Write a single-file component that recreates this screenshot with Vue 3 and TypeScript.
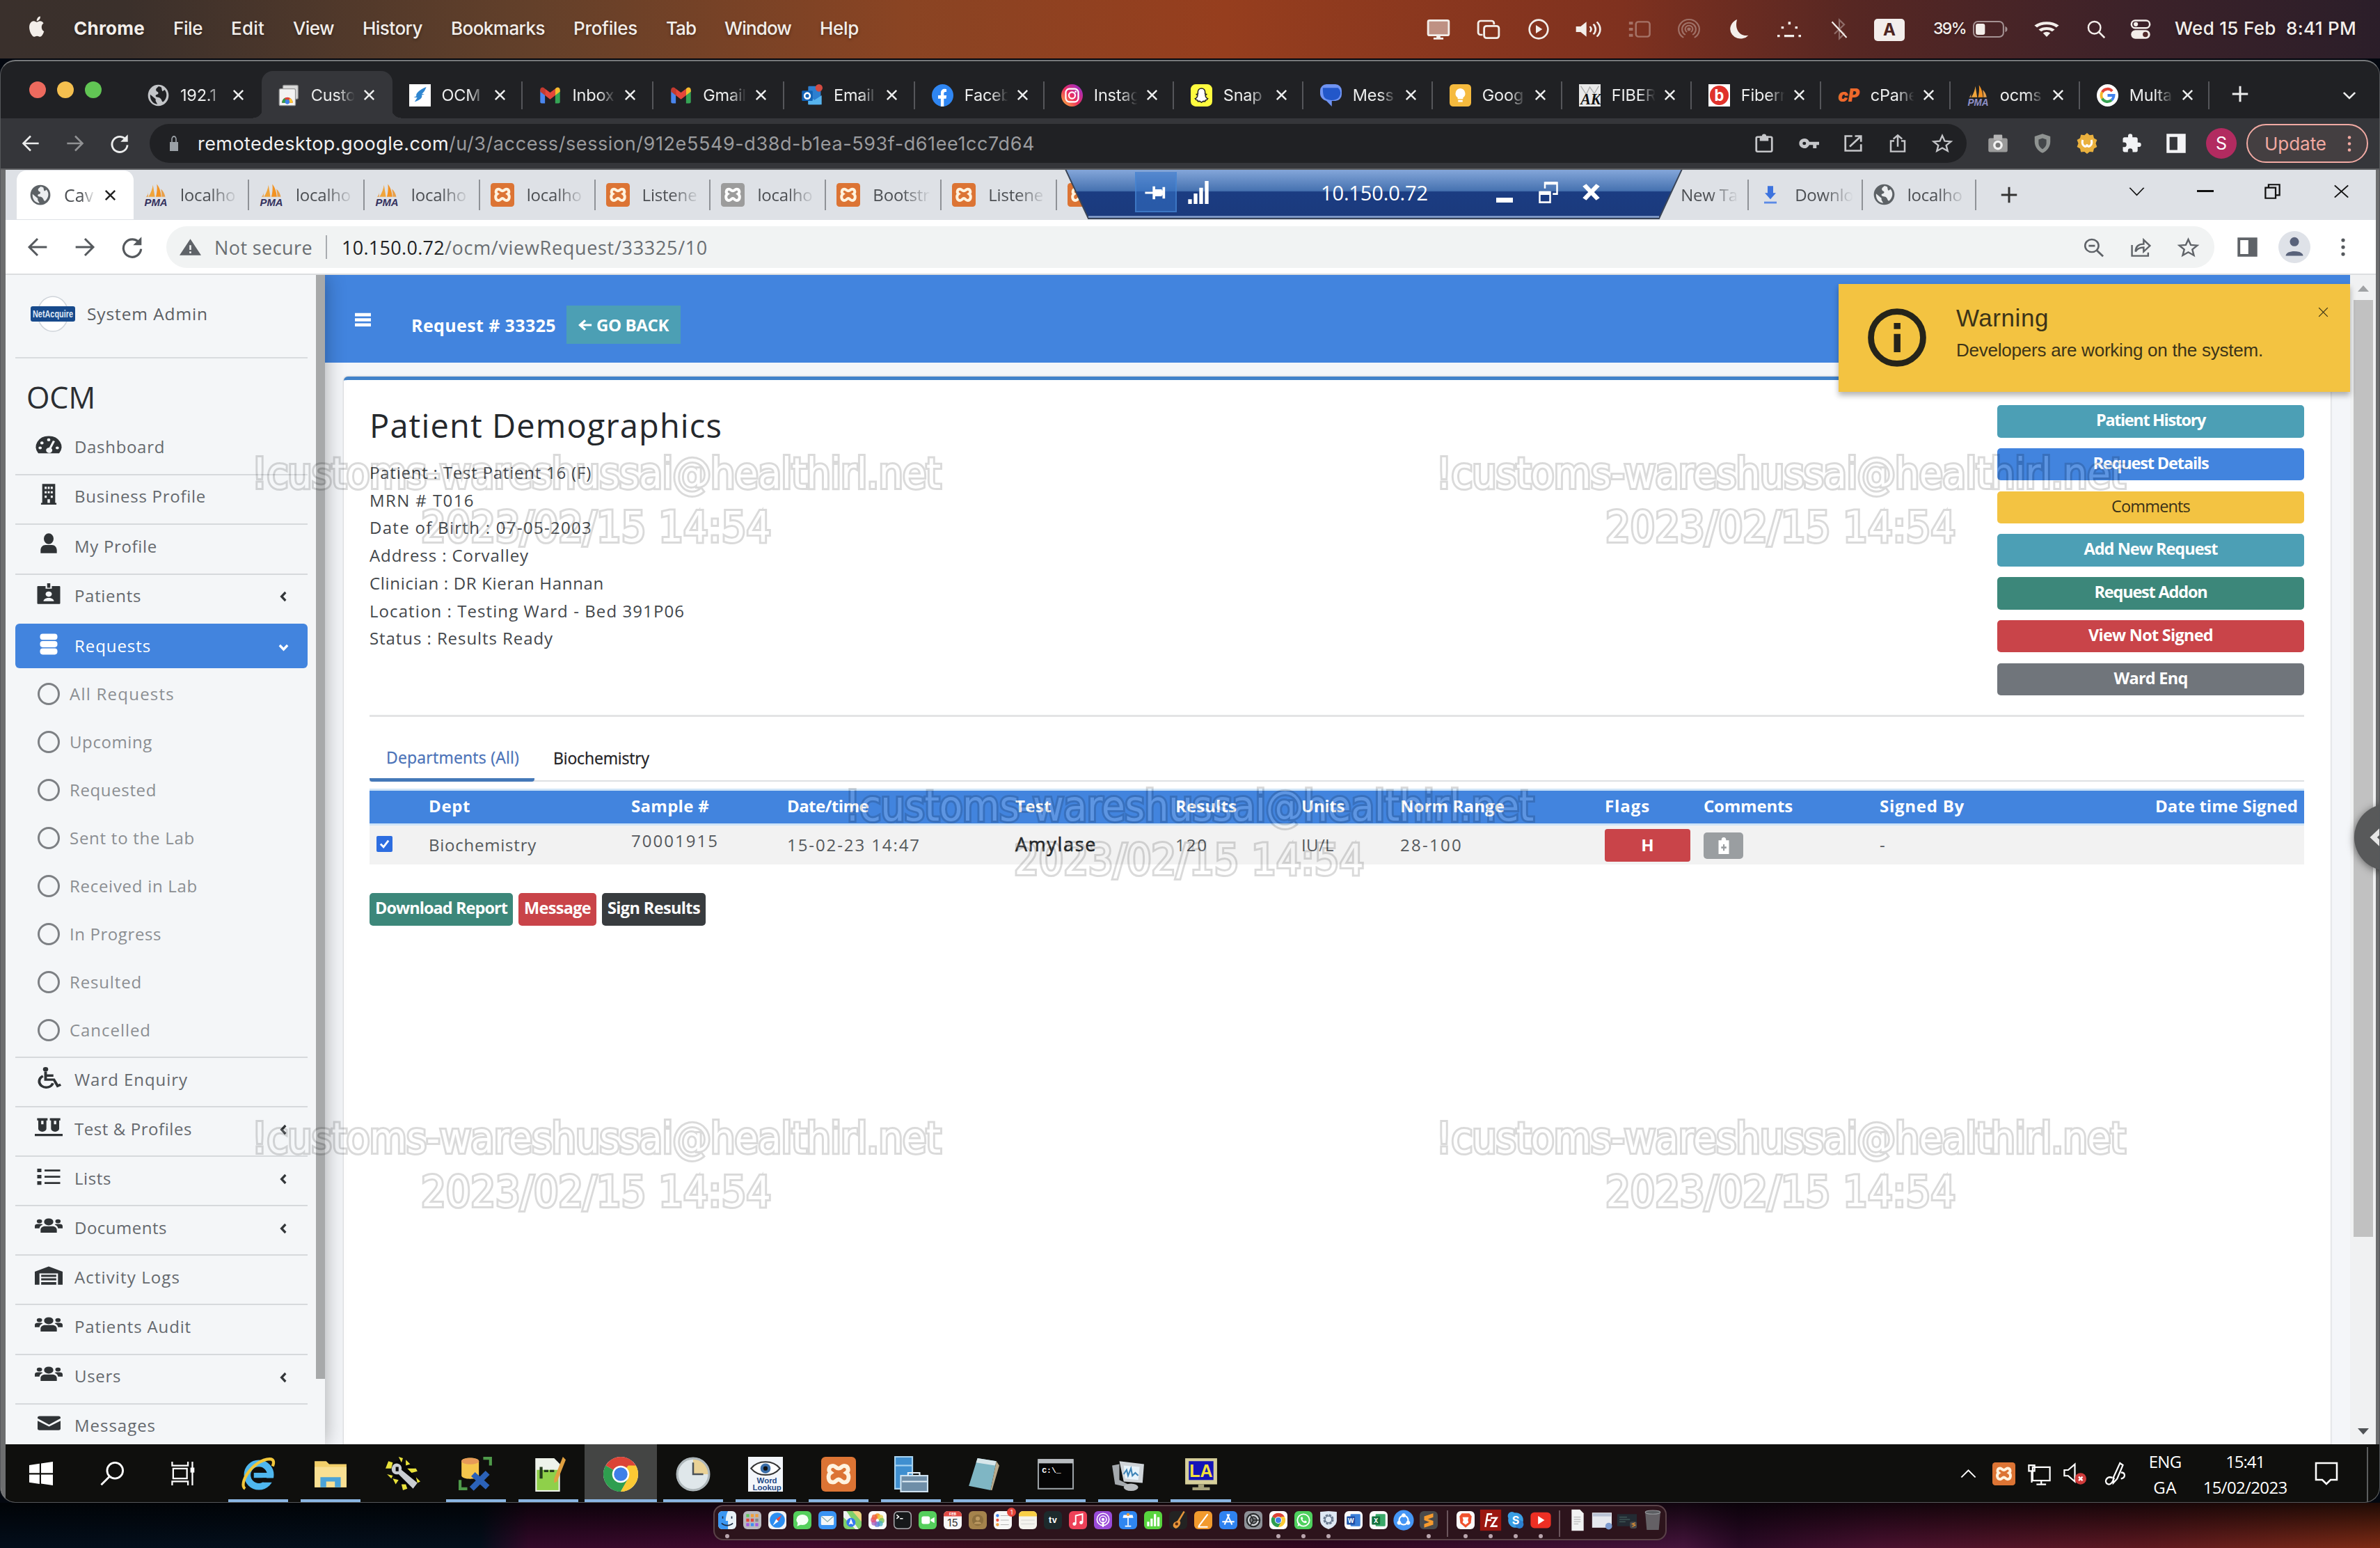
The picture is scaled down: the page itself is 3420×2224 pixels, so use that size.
<script setup lang="ts">
import { h } from 'vue'
import type { FunctionalComponent, ObjectDirective } from 'vue'

type Item = { t: string; w: number }

/* Tracks a label out (or in) so that it occupies the given width. */
const vFit: ObjectDirective<HTMLElement, number> = {
  mounted(el, { value }) {
    const range = document.createRange()
    range.selectNodeContents(el)
    const natural = range.getBoundingClientRect().width
    const count = (el.textContent ?? '').length
    if (!natural || !count) return
    el.style.letterSpacing = `${(value - natural) / count}px`
    el.style.width = `${value}px`
  },
}

const xamppBody =
  '<rect width="24" height="24" rx="3" fill="#dc7434"/><path d="M8.2 6.2c-3 0-3.6 3.4-1.6 4.8-2.400 1.600-2 6.600 1.600 6.600 2 0 2.200-2 3.800-2s1.800 2 3.800 2c3.600 0 4-5 1.600-6.600 2-1.400 1.400-4.800-1.600-4.800-1.700 0-2 1.800-3.800 1.800s-2.100-1.800-3.800-1.800z" fill="none" stroke="#fff3df" stroke-width="2.800"/>'

const pmaBody = (ink: string) =>
  `<path d="M9 2l2 12H4.500C7 10 8.500 6 9 2z" fill="#f0a53c"/><path d="M13 1c3 4 4 8 4.500 13h-5.500c1-4 1.500-8 1-13z" fill="#f29222"/><path d="M17 6c2.500 2 4 5 4.500 8h-3.500c0-3-.3-5-1-8zM4 9c.2 2-.6 4-2 5h2.200z" fill="#e8a04a"/><text x="12" y="23.500" text-anchor="middle" font-family="Liberation Sans, sans-serif" font-weight="700" font-style="italic" font-size="10.500" fill="${ink}">PMA</text>`

const chromeBody =
  '<circle cx="12" cy="12" r="12" fill="#fff"/><path d="M12 12L1.600 6A12 12 0 0 1 22.400 6z" fill="#dc4437"/><path d="M12 12L1.600 6A12 12 0 0 0 12 24l5.200-9z" fill="#2f9e4f"/><path d="M12 12l5.200-6h5.200A12 12 0 0 1 12 24l5-9z" fill="#fbc934"/><circle cx="12" cy="12" r="5.900" fill="#fff"/><circle cx="12" cy="12" r="4.700" fill="#3f7fe8"/>'

const globeBody = (fg: string, bg: string) =>
  `<circle cx="12" cy="12" r="11.500" fill="${fg}"/><path d="M3 11l6 5v2l2 3.500c-5-.5-8.500-4.500-8-10.500zM12 2.500c-1 1.500-3 2-2.500 4s2.500 1 2.500 3-3 1-3 3 5 1 5.500 3c1.500 1 1 3.500 3 3.500 4-3.500 5-9 1.500-13l-2 1.500c-1 0-1-2-1.500-4-1-.8-2.500-1-3.500-1z" fill="${bg}"/>`

const app = (fill: string, inner: string) => `<rect width="24" height="24" rx="5.500" fill="${fill}"/>${inner}`
const glyph = (s: string, size: number, fill: string, y = 17.5, weight = 700) =>
  `<text x="12" y="${y}" text-anchor="middle" font-family="Inter, sans-serif" font-weight="${weight}" font-size="${size}" fill="${fill}">${s}</text>`
const line = (d: string, w = 2, c = 'currentColor') =>
  `<path d="${d}" fill="none" stroke="${c}" stroke-width="${w}"/>`
const solid = (d: string, c = 'currentColor') => `<path d="${d}" fill="${c}"/>`
const usersBody = solid(
  'M12 3.500a4 4 0 1 1 0 8 4 4 0 0 1 0-8zM4 4.500a2.300 2.300 0 1 1 0 4.600 2.300 2.300 0 0 1 0-4.600zM20 4.500a2.300 2.300 0 1 1 0 4.600 2.300 2.300 0 0 1 0-4.600zM5 20v-3.500c0-2.500 2-4 4-4h6c2 0 4 1.500 4 4V20zM0 15v-2.500C0 11 1 10 2.500 10h2.800c.6 0 1.200.3 1.500.7C5 11.700 4 13.200 4 15zM24 15v-2.500c0-1.500-1-2.500-2.500-2.500h-2.800c-.6 0-1.200.3-1.500.7 1.800 1 2.800 2.500 2.800 4.300z',
)

const icons: Record<string, string> = {
  apple: solid('M17.100 12.700c0-2.500 2-3.700 2.100-3.800-1.200-1.700-3-1.900-3.600-2-1.500-.1-3 .9-3.700.9s-2-.9-3.200-.9c-1.700 0-3.200 1-4.100 2.500-1.700 3-.4 7.500 1.300 10 .8 1.200 1.800 2.500 3.100 2.500 1.200 0 1.700-.8 3.200-.8s1.900.8 3.200.8 2.200-1.200 3-2.400c.9-1.400 1.300-2.700 1.300-2.800 0 0-2.600-1-2.600-4zM14.700 5.400c.7-.8 1.100-2 1-3.100-1 0-2.200.6-2.900 1.500-.6.7-1.200 1.900-1 3 1.100.1 2.200-.6 2.900-1.400z'),
  display: '<rect x="1.500" y="2.500" width="21" height="16" rx="1.500" fill="#fff" fill-opacity=".45" stroke="currentColor" stroke-width="2"/>' + solid('M10 19h4v2h3v2H7v-2h3z'),
  windows: '<rect x="7.500" y="8.500" width="15" height="13" rx="2.500" fill="none" stroke="currentColor" stroke-width="2"/>' + line('M6 18H4a2.500 2.500 0 0 1-2.500-2.500v-10A2.500 2.500 0 0 1 4 3h11a2.500 2.500 0 0 1 2.500 2.500v1.500'),
  playc: '<circle cx="12" cy="12" r="10" fill="none" stroke="currentColor" stroke-width="2"/>' + solid('M9 7.500l7 4.500-7 4.500z'),
  volume: solid('M1 9h4l5-5v16l-5-5H1z') + line('M13 9c1.300 1.800 1.300 4.200 0 6M16 6.500c2.500 3.300 2.500 7.700 0 11M19 4c3.800 4.800 3.800 11.200 0 16', 1.6),
  stage: '<rect x="9" y="4" width="14" height="16" rx="2.500" fill="none" stroke="currentColor" stroke-width="1.800"/>' + solid('M2 4h4v3H2zM2 10.500h4v3H2zM2 17h4v3H2z'),
  airdrop: line('M6.500 21a10.500 10.500 0 1 1 11 0M8.300 18a7 7 0 1 1 7.400 0M10 15a3.800 3.800 0 1 1 4 0', 1.5) + '<circle cx="12" cy="12" r="1.800" fill="currentColor"/>',
  moon: solid('M10 1.500C5.500 3.500 3 7.500 3 12a10.500 10.500 0 0 0 18.500 6.500C13 20.500 7 12 10 1.500z'),
  keyglow: solid('M11 4h2.500v3H11zM4 9h2.500v2.500H4zM18 9h2.500v2.500H18zM0 18h2.500v2.500H0zM21.500 18H24v2.500h-2.500zM7 18h10v2.500H7z'),
  btoff: '<g opacity=".35">' + line('M6 7l12 10-6 5V2l6 5L6 17', 1.8) + '</g>' + line('M3 4l18 17', 1.8),
  battery: '<rect x="1" y="1" width="42" height="22" rx="6" fill="none" stroke="#fff" stroke-opacity=".5" stroke-width="2"/><rect x="4" y="4" width="13" height="16" rx="3" fill="currentColor"/><path d="M45.500 8c2 .5 3 2 3 4s-1 3.500-3 4z" fill="#fff" fill-opacity=".5"/>',
  wifi: solid('M12 23l-3.500-4.700a5.300 5.300 0 0 1 7 0z') + line('M5.500 15a9.500 9.500 0 0 1 13 0M1.500 9.700a15.200 15.200 0 0 1 21 0', 3.6),
  search: '<circle cx="10" cy="10" r="7.500" fill="none" stroke="currentColor" stroke-width="2.100"/>' + line('M15.500 15.500l7 7', 2.2),
  control: '<rect x="1.500" y="2" width="21" height="8.500" rx="4.200" fill="none" stroke="currentColor" stroke-width="2"/><circle cx="6.500" cy="6.200" r="2.500" fill="currentColor"/><rect x="1" y="13" width="22" height="10" rx="5" fill="currentColor"/><circle cx="17.500" cy="18" r="3" fill="#51292a"/>',
  globeDark: globeBody('#c3c5c8', '#202124'),
  globe: globeBody('#5d6266', '#eceef0'),
  crd: '<rect x="5" y="1" width="17" height="15" rx="1.500" fill="#d8d8d8" stroke="#888"/><rect x="1" y="5" width="18" height="18" rx="1.500" fill="#f3f3f3" stroke="#999"/><path d="M4 20a6 6 0 0 1 12 0z" fill="#dc4437"/><path d="M4 20a6 6 0 0 1 3-5l3 5z" fill="#2f9e4f"/><path d="M16 20a6 6 0 0 0-3-5l-3 5z" fill="#fbc934"/><circle cx="10" cy="19" r="2.500" fill="#3f7fe8"/>',
  bolt: '<rect width="24" height="24" fill="#fff"/><path d="M19 3C11 6 7 10 8 13l-3 1 4 .5-3 4.500c7-2 9-5 8-7.500l3-.5-3-.8c2-1 4-4 5-7.200z" fill="#2f86d0"/>',
  gmail: solid('M1 6v13c0 1 .7 1.700 1.700 1.700H6.300V11z', '#4a86ee') + solid('M23 6v13c0 1-.7 1.700-1.700 1.700h-3.600V11z', '#35a555') + solid('M17.700 4.800L12 9 6.300 4.800V12L12 16.300l5.700-4.300z', '#e5463a') + solid('M1 6v2l5.300 4V4.800l-1.300-1C3.300 2.600 1 3.800 1 6z', '#c33a30') + solid('M23 6v2l-5.300 4V4.800l1.300-1c1.700-1.200 4 0 4 2.200z', '#f6bb2e'),
  outlook: '<rect x="8" y="2" width="14" height="20" rx="1" fill="#2d7fd0"/><path d="M8 12l7 5 8-5v10H8z" fill="#57b4ee"/><rect x="1" y="7" width="12" height="11" rx="1" fill="#1363b5"/>' + '<circle cx="7" cy="12.500" r="3" fill="none" stroke="#fff" stroke-width="2"/><circle cx="20" cy="4" r="4" fill="#d24b42"/>',
  facebook: '<circle cx="12" cy="12" r="12" fill="#2f86f2"/>' + solid('M10 24v-8.500H7V12h3V9.500C10 6.300 12 5 14.300 5c1 0 2 .2 2 .2v3h-1.200c-1.300 0-1.700.8-1.700 1.600V12h3l-.5 3.500h-2.500V24z', '#fff'),
  instagram: '<defs><linearGradient id="ig" x1="0" y1="1" x2="1" y2="0"><stop offset="0" stop-color="#fdc43f"/><stop offset=".45" stop-color="#ee2f5b"/><stop offset="1" stop-color="#8a2be0"/></linearGradient></defs><circle cx="12" cy="12" r="12" fill="url(#ig)"/><rect x="5" y="5" width="14" height="14" rx="4" fill="none" stroke="#fff" stroke-width="1.700"/><circle cx="12" cy="12" r="3.500" fill="none" stroke="#fff" stroke-width="1.700"/><circle cx="16" cy="8" r="1" fill="#fff"/>',
  snapchat: '<rect width="24" height="24" rx="5.500" fill="#fffc3f"/><path d="M12 4.500c-2.500 0-4 1.800-4 4v2l-1.500.3 1.300 1.500c-.5 1.800-1.600 2.800-2.800 3.200l1 1.300 1.500.4.500 1.300 2-.2 2 1.300 2-1.300 2 .2.500-1.300 1.500-.4 1-1.300c-1.200-.4-2.300-1.400-2.800-3.200l1.300-1.500L16 10.500v-2c0-2.200-1.500-4-4-4z" fill="#fff" stroke="#222" stroke-width="1.200"/>',
  gmessages: '<path d="M0 7a7 7 0 0 1 7-7h10a7 7 0 0 1 7 7v4a7 7 0 0 1-7 7h-4v6l-6-6C3 17 0 14 0 10z" fill="#6f93f2"/><path d="M3 4h17a7 7 0 0 1 1 10c-4 5-15 4-17-1-1-3-1-6-1-9z" fill="#2257c9"/>',
  keep: '<rect width="24" height="24" rx="4" fill="#f5ba3e"/>' + solid('M12 4.500a5.500 5.500 0 0 1 3 10V16H9v-1.500a5.500 5.500 0 0 1 3-10zM9.500 17h5v2.200h-5z', '#fff'),
  ak: '<rect width="24" height="24" fill="#e9e9e9"/><path d="M2 2l6 9 4-8 5 7 5-8" stroke="#aaa" fill="none"/><text x="13" y="22" text-anchor="middle" font-family="Liberation Serif, serif" font-weight="700" font-style="italic" font-size="17" fill="#111">AK</text>',
  biz: '<rect width="24" height="24" fill="#fff"/><circle cx="12" cy="12" r="10.500" fill="#e0322b"/>' + glyph('b', 17, '#fff', 18),
  cpanel: '<text x="12" y="19" text-anchor="middle" font-family="Inter, sans-serif" font-weight="900" font-style="italic" font-size="19" fill="#ee6a2c">cP</text>',
  pma: pmaBody('#34315e'),
  pmaLight: pmaBody('#8e90c8'),
  google: '<circle cx="12" cy="12" r="12" fill="#fff"/>' + line('M17.200 7.500A7 7 0 0 0 6 8.500', 3, '#e24436') + line('M6 8.500a7 7 0 0 0 0 7', 3, '#f5b92e') + line('M6 15.500a7 7 0 0 0 10.500 1.600', 3, '#37a353') + line('M12 12h7a7 7 0 0 1-2.500 5', 3, '#4282ee'),
  close: line('M5 5l14 14M19 5L5 19', 2.6),
  thinClose: line('M4 4l16 16M20 4L4 20', 1.6),
  plus: line('M12 3v18M3 12h18', 2.4),
  chevDown: line('M5 8l7 8 7-8', 2.4),
  chevThin: line('M3 5l9 14 9-14', 1.8),
  back: line('M22 12H3M12 3l-9 9 9 9', 2.2),
  fwd: line('M2 12h19M12 3l9 9-9 9', 2.2),
  reload: line('M20 8a9.500 9.500 0 1 0 1.500 6', 2.4) + solid('M22 1v9h-9z'),
  lock: solid('M4 10h16v13H4z') + line('M8 10V6a4 4 0 0 1 8 0v4', 2.2),
  clipboard: '<rect x="3" y="4" width="18" height="18" rx="1.500" fill="none" stroke="currentColor" stroke-width="2.200"/>' + solid('M7 3h2.500a2.500 2.500 0 0 1 5 0H17v6H7z'),
  key: '<path fill-rule="evenodd" d="M7 6a6 6 0 0 1 5.700 4H24v4h-3v4h-4v-4h-4.300A6 6 0 1 1 7 6zm0 4a2 2 0 1 0 0 4 2 2 0 0 0 0-4z" fill="currentColor"/>',
  external: line('M11 3H3v18h18v-8M14 3h7v7M21 3L8 16', 2.2),
  share: line('M8 9H4v13h16V9h-4M12 16V2M7 6.500L12 2l5 4.500', 2),
  star: line('M12 2.500l2.800 6.600 7.200.6-5.500 4.700 1.700 7L12 17.600l-6.200 3.800 1.700-7L2 9.700l7.200-.6z', 1.9),
  camera: '<rect x="1" y="6" width="22" height="16" rx="2" fill="#9b9b9b"/><rect x="7" y="2" width="10" height="6" rx="1" fill="#b5b5b5"/><circle cx="12" cy="14" r="5.500" fill="#f2f2f2"/><circle cx="12" cy="14" r="2.800" fill="#777"/>',
  shield: '<path d="M12 1l9 3v6c0 6-4 11-9 13-5-2-9-7-9-13V4z" fill="#8f9391"/><path d="M12 6l4.500 1.500v4c0 3-2 5.500-4.500 7-2.500-1.500-4.500-4-4.500-7v-4z" fill="#44474a"/>',
  honey: '<path d="M12 0l3 2.500 4-.5 1 4 3.500 2L22 12l1.500 4-3.500 2-1 4-4-.5L12 24l-3-2.500-4 .5-1-4-3.500-2L2 12 .5 8 4 6l1-4 4 .5z" fill="#eab13e"/>' + line('M7 8c-2 7 5 10 5 5 0 5 7 2 5-5', 2.4, '#fff'),
  puzzle: solid('M20.500 11H19V7a2 2 0 0 0-2-2h-4V3.500a2.500 2.500 0 0 0-5 0V5H4a2 2 0 0 0-2 2v3.800h1.500a2.700 2.700 0 0 1 0 5.400H2V20c0 1.100.9 2 2 2h3.800v-1.500a2.700 2.700 0 0 1 5.400 0V22H17a2 2 0 0 0 2-2v-4h1.500a2.500 2.500 0 0 0 0-5z'),
  panelDark: '<path fill-rule="evenodd" d="M1 1h22v22H1zM4.500 4.500v15h9v-15z" fill="#f4f4f6"/>',
  panel: '<path fill-rule="evenodd" d="M1 1h22v22H1zM4 4v16h9V4z" fill="#5f6368"/>',
  dots: '<circle cx="12" cy="4" r="2.100" fill="currentColor"/><circle cx="12" cy="12" r="2.100" fill="currentColor"/><circle cx="12" cy="20" r="2.100" fill="currentColor"/>',
  xampp: xamppBody,
  xamppGrey: xamppBody.replace('#dc7434', '#9c9c9c').replace('#fff3df', '#fff'),
  download: solid('M8 1h8v9h4l-8 8-8-8h4z', '#3d73de') + solid('M3 21h18v2.500H3z', '#5b8ae6'),
  warn: '<path fill-rule="evenodd" d="M12 1l12 21H0zM11 9v6h2V9zM11 17v2.500h2V17z" fill="#5f6368"/>',
  zoomOut: '<circle cx="10" cy="10" r="7.500" fill="none" stroke="currentColor" stroke-width="2"/>' + line('M15.500 15.500l7 7M6.500 10h7', 2.2),
  shareWin: line('M2 9v13h18v-4M6 17c0-6 3-9 9-9V3l7 7-7 7v-5c-4 0-7 1-9 5z', 1.9),
  person: '<circle cx="12" cy="12" r="12" fill="#dfe2e8"/><circle cx="12" cy="8" r="3.400" fill="#59627a"/><path d="M5.500 18.500c0-4.500 13-4.500 13 0z" fill="#59627a"/>',
  restore: line('M3 7h13v14H3zM7 7V3h14v14h-5', 2),
  pin: line('M1 12h9M10 4v16M10 9h8M10 15h8M20 5v14', 2.6) + solid('M10 9h9v6h-9z'),
  bars: solid('M1 19h4v5H1zM7 13h4v11H7zM13 7h4v17h-4zM19 0h4v24h-4z'),
  rdpRestore: line('M2 12h12v11H2zM8 8V2h14v12h-5', 2) + solid('M2 11h12v4H2zM8 1h14v3H8z'),
  bold: line('M4 2l16 20M20 2L4 22', 5.5),
  dash: '<path fill-rule="evenodd" d="M12 2a12 12 0 0 0-10 19h20A12 12 0 0 0 12 2zm0 2.500a1.600 1.600 0 1 1 0 3.200 1.600 1.600 0 0 1 0-3.200zM5.500 8a1.600 1.600 0 1 1 0 3.200A1.600 1.600 0 0 1 5.500 8zM3.800 13.500a1.600 1.600 0 1 1 0 3.200 1.600 1.600 0 0 1 0-3.200zm16.400 0a1.600 1.600 0 1 1 0 3.200 1.600 1.600 0 0 1 0-3.200zM16 7l2 .7-3.500 7.800a3 3 0 1 1-2-.8z" fill="currentColor"/>',
  building: '<path fill-rule="evenodd" d="M4 1h16v21h1.500v2h-19v-2H4zM7 4v2.500h2.500V4zM14.500 4v2.500H17V4zM7 9v2.500h2.500V9zM14.500 9v2.500H17V9zM7 14v2.500h2.500V14zM14.500 14v2.500H17V14zM10.500 18v4h3v-4zM10.800 4v2.500h2.400V4zM10.800 9v2.500h2.400V9z" fill="currentColor"/>',
  user: solid('M12 1a6 6 0 1 1 0 12 6 6 0 0 1 0-12zM2 23v-3c0-3.500 2.500-6 6-6h8c3.500 0 6 2.500 6 6v3z'),
  badge: '<path fill-rule="evenodd" d="M2 3h7v3h6V3h7c.6 0 1 .4 1 1v18c0 .6-.4 1-1 1H2c-.6 0-1-.4-1-1V4c0-.6.4-1 1-1zM12 9a3 3 0 1 0 0 6 3 3 0 0 0 0-6zM7 20h10c0-5-10-5-10 0z" fill="currentColor"/><rect x="10.500" y="0" width="3" height="5" fill="currentColor"/>',
  database: '<g fill="currentColor"><rect x="2" y="1" width="20" height="6.500" rx="3"/><rect x="2" y="8.700" width="20" height="6.500" rx="3"/><rect x="2" y="16.400" width="20" height="6.500" rx="3"/></g>',
  wheelchair: '<circle cx="9" cy="2.500" r="2.500" fill="currentColor"/>' + line('M9 5v9h8l3.500 7 3-1.500M9.500 9.500h7M6.500 10a6.700 6.700 0 1 0 9.500 8', 2.6),
  vials: '<path fill-rule="evenodd" d="M2 2h9v2.500h-1V14a3.500 3.500 0 0 1-7 0V4.500H2zM5.500 5v4h2V5zM13 2h9v2.500h-1V14a3.500 3.500 0 0 1-7 0V4.500h-1zM16.500 5v4h2V5zM0 20h24v2.500H0z" fill="currentColor"/>',
  list: solid('M1 3h4v4H1zM8 4h15v2.200H8zM1 10h4v4H1zM8 11h15v2.200H8zM1 17h4v4H1zM8 18h15v2.200H8z'),
  users: usersBody,
  warehouse: '<path fill-rule="evenodd" d="M0 8l12-6 12 6v15h-4V10H4v13H0zM5.500 11.500h13v2.500h-13zM5.500 15.500h13V18h-13zM5.500 20h13v3h-13z" fill="currentColor"/>',
  envelope: '<path d="M2 3h20c1 0 2 .8 2 2v1l-12 8L0 6V5c0-1.200 1-2 2-2zM0 9l12 7.500L24 9v10c0 1.200-1 2-2 2H2c-1 0-2-.8-2-2z" fill="currentColor"/>',
  chevL: line('M16 4l-8 8 8 8', 4.6),
  chevD: line('M4 8l8 8 8-8', 4.8),
  burger: solid('M1 2h22v5H1zM1 10h22v5H1zM1 18h22v5H1z'),
  arrowL: line('M23 12H4M12 3l-9 9 9 9', 4.2),
  info: '<circle cx="12" cy="12" r="10.700" fill="none" stroke="currentColor" stroke-width="2.500"/>' + solid('M10.700 6h2.700v2.500h-2.700zM10.700 10.500h2.700V18h-2.700z'),
  check: line('M4 12l6 6L20 5', 4),
  note: '<path fill-rule="evenodd" d="M3 4h5a4 4 0 0 1 8 0h5v19H3zM10.800 9.500v3.200H7.600v2.600h3.200v3.200h2.600v-3.200h3.200v-2.600h-3.200V9.500z" fill="#fff"/>',
  winlogo: solid('M0 3.500L10.500 2v9.500H0zM12 1.800L24 0v11.500H12zM0 13h10.500v9.500L0 21zM12 13h12v11l-12-1.700z'),
  magnify: '<circle cx="15" cy="9" r="8" fill="none" stroke="currentColor" stroke-width="2"/>' + line('M9.500 15L1 23.500', 2),
  taskview: line('M1 0v4h16V0M1 24v-4h16v4M2 7h14v10H2zM21.500 0v24', 1.6) + solid('M19.500 6h4v5h-4z'),
  ie: '<circle cx="12.500" cy="12.500" r="8" fill="none" stroke="#4fb7ee" stroke-width="4.600"/><path d="M9 11h11v3.500H9z" fill="#4fb7ee"/><path d="M15 14.600h8.500v3h-8z" fill="#0f0f0d"/><path d="M3 22C-2 19 8 2 20 1.500c3 0 3 2.500 2 5" fill="none" stroke="#f2c73a" stroke-width="2"/>',
  folder: '<path d="M1 3h8l2 2h12v16H1z" fill="#f2cf6a"/><path d="M1 7h22v14H1z" fill="#f9e093"/><path d="M5 21v-7h14v7h-4v-4H9v4z" fill="#4aa3d8"/>',
  tools: '<path d="M2 5l8-3 4 3 6 2-2 4 5 5-3 6-8-2-7-8z" fill="#050505"/><path d="M0 8l2-5 3 1-1 4zM9 0l3 1-1 3zM14 2l3 3-3 1zM15 8l6 0 1 2-4 1zM1 12l4 1-1 2zM5 15l4 1-2 3zM11 19l3 0 1 3-3 1zM21 14l3 3-2 1z" fill="#e8e13a"/><path fill-rule="evenodd" d="M5 6c2-3 7-1 6 3l11 9-3 4-10-10c-4 1-6-3-4-6zm2 1l0 3 2 0 0-3z" fill="#c9cdd1"/>',
  sql: '<path d="M2 3c0-3 12-3 12 0v10c0 3-12 3-12 0z" fill="#f6c64c"/><ellipse cx="8" cy="3" rx="6" ry="2.200" fill="#e79a58"/><path d="M10 12l10 9M20 11L9 22" stroke="#2b62b8" stroke-width="4"/><path d="M17 1h5v5M1 16v6h5" stroke="#4f9a4a" stroke-width="2" fill="none"/>',
  npp: '<path d="M3 1h13l4 4v19H3z" fill="#eef2ea"/><path d="M4 9h15v14H4z" fill="#8fd04a"/><path d="M6 7h2v8H6zM9 9h3v1.500H9zM13 9h3v1.500h-3z" fill="#243a1c"/><path d="M22 0l2 2-6 15-2 1v-3z" fill="#e0a040"/>',
  chrome: chromeBody,
  clock: '<circle cx="12" cy="12" r="11.500" fill="#dfe7ea"/><path d="M12 12V1.500A10.500 10.500 0 0 1 22.500 12z" fill="#ead296"/><circle cx="12" cy="12" r="11" fill="none" stroke="#aeb7ba" stroke-width="1.500"/><path d="M12 4v8h7" stroke="#4a5258" stroke-width="1.200" fill="none"/>',
  wordlookup: '<rect width="24" height="24" fill="#f3f6fa"/><path d="M2 8c5-6 15-6 20 0-5 6-15 6-20 0z" fill="#fff" stroke="#333"/><circle cx="12" cy="8" r="3.500" fill="#3a6ea8"/><circle cx="12" cy="8" r="1.500" fill="#111"/><text x="13" y="18" text-anchor="middle" font-family="Liberation Sans, sans-serif" font-weight="700" font-size="5.500" fill="#234a86">Word</text><text x="13" y="23" text-anchor="middle" font-family="Liberation Sans, sans-serif" font-weight="700" font-size="5.500" fill="#234a86">Lookup</text>',
  server: '<path d="M1 0h12v22H1z" fill="#3f8fd0" stroke="#a8d4f2"/><path d="M1 6h12" stroke="#a8d4f2"/><rect x="5" y="13" width="18.500" height="11" fill="#6f8ea8" stroke="#cfe2f0"/><path d="M10 13v-2h8v2M6 17h17" stroke="#e8f2fa" fill="none"/>',
  notepad: '<path d="M8 1l13 2-4 20-15-3z" fill="#7fb6c4"/><path d="M8 1l13 2-1 3L7 4z" fill="#d8e6ea"/><path d="M21 3l2 3-5 17-1 0z" fill="#b9a98a"/>',
  cmd: '<rect x="0" y="2" width="24" height="20" fill="#050505" stroke="#9aa0a4"/><rect x="0" y="1.500" width="24" height="3" fill="#b8bcc0"/><text x="2.500" y="11" font-family="Liberation Mono, monospace" font-weight="700" font-size="5.500" fill="#fff">C:\\_</text>',
  monitor: '<path d="M6 3l17 2-1 13-13-1z" fill="#cfd4d8"/><path d="M9 6l11 1-1 9-9-1z" fill="#e8f4fb"/><path d="M9 12l2-3 1 4 2-5 1 5 2-2 2 2" stroke="#3d84b8" fill="none"/><path d="M1 6l5-1v11l6 3v2l-9-2z" fill="#a4a9ad"/><ellipse cx="14" cy="21" rx="5" ry="2.500" fill="#b9bdc0"/>',
  la: '<rect x="1" y="1" width="22" height="18" fill="#d6cf9a"/><rect x="3.500" y="3" width="17" height="13" fill="#1414b8"/><text x="12" y="14" text-anchor="middle" font-family="Liberation Sans, sans-serif" font-weight="700" font-size="12" fill="#f4e23c">LA</text><path d="M10 19h4v2h4v2H6v-2h4z" fill="#a8a47c"/>',
  caretUp: line('M3 18l9-11 9 11', 1.8),
  net: line('M5 5h18v14H5zM14 19v4M9 23h10M1 3h6v6H1zM4 9v12', 1.6),
  mute: line('M1 8h4l7-6v18l-7-6H1z', 1.6) + '<circle cx="18" cy="17" r="6" fill="#cf3b3b"/>' + line('M16 15l4 4M20 15l-4 4', 1.6, '#fff'),
  pen: line('M10 16l7-14 3 2-6 13-4 4zM9 16c-6-2-9 4-5 6s6-4 7-6M18 11c5 0 5 5 0 6', 1.6),
  action: line('M2 2h20v16h-6l-4 4-4-4H2z', 1.7),
  finder: app('#e9f1f7', '<path d="M5.500 0H13c-2 4-3 8-3 13h3v11H5.500A5.500 5.500 0 0 1 0 18.500v-13A5.500 5.500 0 0 1 5.500 0z" fill="#3b97f3"/>' + line('M6 7v3M18 7v3M4.500 16c4 4 11 4 15 0', 1.5, '#1d2c44')),
  launchpad: app('#b9b9bf', '<path d="M4 4h4v4H4z" fill="#5fc65a"/><path d="M10 4h4v4h-4zM16 4h4v4h-4z" fill="#f0a03c"/><path d="M4 10h4v4H4zM10 10h4v4h-4z" fill="#e2463c"/><path d="M16 10h4v4h-4z" fill="#888"/><path d="M4 16h4v4H4zM16 16h4v4h-4z" fill="#a35ae0"/><path d="M10 16h4v4h-4z" fill="#3f8ef0"/>'),
  safari: app('#f0f2f4', '<circle cx="12" cy="12" r="10" fill="#2c8df0"/><path d="M18 5l-4.500 8.500-3-3z" fill="#f0483c"/><path d="M6 19l4.500-8.500 3 3z" fill="#fff"/>'),
  imessage: app('#55cf5c', '<ellipse cx="12" cy="11.500" rx="8" ry="7" fill="#f5fff5"/><path d="M6 15l-1 5 5-2z" fill="#f5fff5"/>'),
  mail: app('#3a93f3', '<rect x="3.500" y="6.500" width="17" height="12" rx="1.500" fill="#f4f6f8"/>' + line('M4 7l8 7 8-7', 1.2, '#8aa')),
  maps: app('#7fd06c', '<path d="M12 0l12 14V5.500A5.500 5.500 0 0 0 18.500 0z" fill="#f0d080"/><path d="M0 8l16 16h4L4 0H0z" fill="#eef2f0"/><circle cx="10" cy="15" r="6" fill="#3478f0"/><path d="M10 10l3 8-3-1.500L7 18z" fill="#fff"/>'),
  photos: app('#fafafa', '<circle cx="12" cy="6.500" r="3.600" fill="#f6a03a"/><circle cx="16" cy="8.500" r="3.600" fill="#e8d24a" opacity=".8"/><circle cx="17.500" cy="12.500" r="3.600" fill="#7cc25a" opacity=".8"/><circle cx="15.500" cy="16.500" r="3.600" fill="#4ab0c0" opacity=".8"/><circle cx="11.500" cy="17.500" r="3.600" fill="#5a7ad8" opacity=".8"/><circle cx="7.500" cy="15.500" r="3.600" fill="#a860c0" opacity=".8"/><circle cx="6.500" cy="11.500" r="3.600" fill="#e0507a" opacity=".8"/><circle cx="8" cy="8" r="3.600" fill="#f0603c" opacity=".8"/>'),
  terminal: '<rect x=".7" y=".7" width="22.600" height="22.600" rx="5" fill="#16181a" stroke="#a9a9ad" stroke-width="1.400"/>' + line('M4 5l3 2.500L4 10M8.500 10h4', 1.4, '#fff'),
  facetime: app('#55cf5c', '<rect x="4" y="7" width="11" height="10" rx="2.500" fill="#fff"/><path d="M16 11l5-3v8l-5-3z" fill="#fff"/>'),
  calendar: app('#f7f7f7', '<path d="M0 7V5.500A5.500 5.500 0 0 1 5.500 0h13A5.500 5.500 0 0 1 24 5.500V7z" fill="#e04a44"/>' + glyph('FEB', 5, '#fff', 5.6) + glyph('15', 14, '#333', 20.5, 400)),
  contacts: app('#a5834c', '<circle cx="12" cy="12" r="7.500" fill="#8d6f3f"/><circle cx="12" cy="10" r="2.800" fill="#bd9a62"/><path d="M7 17c1-4 9-4 10 0z" fill="#bd9a62"/>'),
  reminders: app('#f7f7f7', '<circle cx="5" cy="6" r="2" fill="#3c82f0"/><circle cx="5" cy="12" r="2" fill="#f0503c"/><circle cx="5" cy="18" r="2" fill="#f0a03c"/>' + line('M9 6h11M9 12h11M9 18h11', 1, '#b8b8b8')),
  notes: app('#f4f3ee', '<path d="M0 7V5.500A5.500 5.500 0 0 1 5.500 0h13A5.500 5.500 0 0 1 24 5.500V7z" fill="#f8ce46"/>' + line('M3 12h18M3 17h18', 0.8, '#ccc')),
  tv: app('#1d2a2c', glyph('tv', 11, '#fff', 16)),
  music: app('#ee4158', line('M9 17V6l9-2v11', 1.8, '#fff') + '<circle cx="7.300" cy="17" r="2.300" fill="#fff"/><circle cx="16.300" cy="15.300" r="2.300" fill="#fff"/>'),
  podcasts: app('#9a4bd8', '<circle cx="12" cy="11" r="8" fill="none" stroke="#fff" stroke-width="1.500"/><circle cx="12" cy="11" r="4.500" fill="none" stroke="#fff" stroke-width="1.500"/><circle cx="12" cy="11" r="2" fill="#fff"/><path d="M10.500 14h3l-.5 7h-2z" fill="#fff"/>'),
  keynote: app('#2f86f0', '<path d="M5 9h14l-1-4H6z" fill="#fff"/>' + line('M12 9v10M8 20h8', 1.5, '#fff') + '<circle cx="12" cy="4.500" r="2" fill="#f0a03c"/>'),
  numbers: app('#58d43e', solid('M4 14h3v6H4zM8.500 10h3v10h-3zM13 4h3v16h-3zM17.500 8h3v12h-3z', '#fff')),
  garage: app('#232323', '<path d="M19 0l2 1-7 12c3 3-1 9-5 10-4-1-5-5-2-8l4-2z" fill="#e8963a"/><circle cx="10" cy="17" r="2" fill="#5a2c10"/>'),
  pages: app('#f29a2e', line('M6 20L18 4M5 21h13', 2, '#fff')),
  appstore: app('#2f82f0', line('M13.500 4L7 18M10.500 4L17 18M4 14h16', 1.9, '#fff')),
  settings: app('#8e9298', '<circle cx="12" cy="12" r="8.500" fill="#d0d3d6" stroke="#26282a" stroke-width="2"/><circle cx="12" cy="12" r="4.500" fill="#77797c" stroke="#26282a" stroke-width="1.500"/>' + line('M12 12l-4-7M12 12l8 0M12 12l-4 7', 1.4, '#26282a')),
  chromeApp: app('#fff', '<g transform="translate(2.600 2.600) scale(.78)">' + chromeBody + '</g>'),
  whatsapp: app('#4fd05e', '<circle cx="12" cy="12" r="8" fill="none" stroke="#fff" stroke-width="1.700"/><path d="M4 20l1.500-5 3.500 3.500z" fill="#fff"/><path d="M8.500 8l2-.5 1 2.500-1 1c.5 1 1.500 2 2.500 2.500l1-1 2.500 1-.5 2.200c-4 .8-8-3.500-7.500-7.700z" fill="#fff"/>'),
  gear: '<path d="M1 1l11-1 11 1v11c0 6-5 10-11 12C6 22 1 18 1 12z" fill="#dfe8f4"/><circle cx="12" cy="11" r="5.500" fill="none" stroke="#6d7c92" stroke-width="3" stroke-dasharray="3 1.300"/><circle cx="12" cy="11" r="4.500" fill="none" stroke="#6d7c92" stroke-width="1.500"/>',
  word: app('#fafafa', '<rect x="8" y="4" width="13" height="16" rx="1" fill="#3a7fd8"/><rect x="3" y="7" width="11" height="11" rx="1" fill="#1f52a8"/><text x="8.500" y="15.500" text-anchor="middle" font-family="Inter, sans-serif" font-weight="700" font-size="8" fill="#fff">W</text>'),
  excel: app('#fafafa', '<rect x="8" y="4" width="13" height="16" rx="1" fill="#3aa868"/><rect x="3" y="7" width="11" height="11" rx="1" fill="#13703c"/><text x="8.500" y="15.500" text-anchor="middle" font-family="Inter, sans-serif" font-weight="700" font-size="8" fill="#fff">X</text>'),
  shareit: '<circle cx="12" cy="12" r="13.500" fill="#4596f5"/><circle cx="12" cy="12" r="6" fill="none" stroke="#fff" stroke-width="2"/><circle cx="12" cy="5.500" r="2.600" fill="#fff"/><circle cx="6" cy="15.500" r="2.600" fill="#fff"/><circle cx="18" cy="15.500" r="2.600" fill="#fff"/>',
  sublime: app('#4a4a4c', solid('M18 3v5l-7 2.500 7 2.500v5l-12 4v-5l7-2.500L6 12V7z', '#f79a2e')),
  brave: app('#fafafa', '<path d="M7 3h10l3 4-1 9-7 6-7-6-1-9z" fill="#f0512d"/><path d="M8 8h8l-1 4 1 3-4 3-4-3 1-3z" fill="#fff"/>'),
  filezilla: '<rect x="-2" y="-2" width="28" height="28" fill="#9c1710"/>' + line('M5 21L8 4h6M7 12h6M12 9h8l-7 11h8', 2.4, '#fff'),
  skype: '<circle cx="12" cy="12" r="10" fill="#3a9fe6"/><circle cx="7" cy="6.500" r="5.500" fill="#3a9fe6"/><circle cx="17" cy="17.500" r="5.500" fill="#2b7fd0"/>' + glyph('S', 15, '#fff', 17.5),
  youtube: '<rect x="-1.500" y="1.500" width="27" height="21" rx="5" fill="#ee2f24"/>' + solid('M8.500 6.500L17 12l-8.500 5.500z', '#fff'),
  doc: '<path d="M4 -2h11l5 5v23H4z" fill="#f2f2f2"/>' + line('M7 8h9M7 11h9M7 14h9M7 17h6', 0.9, '#aaa'),
  winA: '<rect x="-2" y="2" width="26" height="20" fill="#e6e8ee"/><rect x="-1" y="3" width="24" height="4" fill="#b9c2d4"/><circle cx="20" cy="20" r="4.500" fill="#7d9bd0"/>',
  winB: '<rect x="-2" y="4" width="26" height="16" fill="#232b33"/>' + line('M1 8h10M1 11h14M1 14h8', 1, '#4d6a66') + '<rect x="15" y="14" width="9" height="9" rx="2" fill="#4a4a4c"/><path d="M22 15.500l-4 1.500 4 1.500-4 2" stroke="#f79a2e" fill="none"/>',
  trash: '<path d="M2 2h20l-2 23H4z" fill="#77797d" fill-opacity=".75"/><ellipse cx="12" cy="1.500" rx="10" ry="2.400" fill="#5b5d61" stroke="#97999d"/>',
}

const Ico: FunctionalComponent<{ n: string; vb?: string }> = (p) =>
  h('svg', { viewBox: p.vb ?? '0 0 24 24', preserveAspectRatio: 'none', innerHTML: icons[p.n] })
Ico.props = ['n', 'vb']

const menus: Item[] = [
  { t: 'File', w: 42 }, { t: 'Edit', w: 48 }, { t: 'View', w: 59 }, { t: 'History', w: 86 },
  { t: 'Bookmarks', w: 135 }, { t: 'Profiles', w: 92 }, { t: 'Tab', w: 43 }, { t: 'Window', w: 96 }, { t: 'Help', w: 56 },
]
const status = ['display', 'windows', 'playc', 'volume', 'stage', 'airdrop', 'moon', 'keyglow', 'btoff']

const tabs = [
  ['globeDark', '192.1'], ['crd', 'Custo'], ['bolt', 'OCM'], ['gmail', 'Inbox'], ['gmail', 'Gmail'],
  ['outlook', 'Email'], ['facebook', 'Faceb'], ['instagram', 'Instag'], ['snapchat', 'Snap'], ['gmessages', 'Mess'],
  ['keep', 'Goog'], ['ak', 'FIBER'], ['biz', 'Fiberr'], ['cpanel', 'cPane'], ['pmaLight', 'ocms'], ['google', 'Multa'],
]
const omniIcons = ['clipboard', 'key', 'external', 'share', 'star']
const extIcons = ['camera', 'shield', 'honey', 'puzzle', 'panelDark']

const innerTabs = [
  ['pma', 'localho'], ['pma', 'localho'], ['pma', 'localho'], ['xampp', 'localho'], ['xampp', 'Listene'],
  ['xamppGrey', 'localho'], ['xampp', 'Bootstr'], ['xampp', 'Listene'],
]

type Nav = Item & { i: string; c?: boolean }
const navTop: Nav[] = [
  { i: 'dash', t: 'Dashboard', w: 130 }, { i: 'building', t: 'Business Profile', w: 189 },
  { i: 'user', t: 'My Profile', w: 119 }, { i: 'badge', t: 'Patients', w: 96, c: true },
]
const subNav: Item[] = [
  { t: 'All Requests', w: 151 }, { t: 'Upcoming', w: 119 }, { t: 'Requested', w: 125 }, { t: 'Sent to the Lab', w: 180 },
  { t: 'Received in Lab', w: 184 }, { t: 'In Progress', w: 132 }, { t: 'Resulted', w: 104 }, { t: 'Cancelled', w: 117 },
]
const navBottom: Nav[] = [
  { i: 'wheelchair', t: 'Ward Enquiry', w: 163 }, { i: 'vials', t: 'Test & Profiles', w: 169, c: true },
  { i: 'list', t: 'Lists', w: 53, c: true }, { i: 'users', t: 'Documents', w: 133, c: true },
  { i: 'warehouse', t: 'Activity Logs', w: 152 }, { i: 'users', t: 'Patients Audit', w: 168 },
  { i: 'users', t: 'Users', w: 67, c: true }, { i: 'envelope', t: 'Messages', w: 117 },
]

const patient: Item[] = [
  { t: 'Patient : Test Patient 16 (F)', w: 319 }, { t: 'MRN # T016', w: 151 }, { t: 'Date of Birth : 07-05-2003', w: 320 },
  { t: 'Address : Corvalley', w: 229 }, { t: 'Clinician : DR Kieran Hannan', w: 337 },
  { t: 'Location : Testing Ward - Bed 391P06', w: 453 }, { t: 'Status : Results Ready', w: 264 },
]
const actions = [
  { t: 'Patient History', w: 157, c: 'teal' }, { t: 'Request Details', w: 166, c: 'blue' }, { t: 'Comments', w: 113, c: 'amber' },
  { t: 'Add New Request', w: 192, c: 'teal' }, { t: 'Request Addon', w: 162, c: 'green' },
  { t: 'View Not Signed', w: 179, c: 'red' }, { t: 'Ward Enq', w: 106, c: 'grey' },
]
const heads: Item[] = [
  { t: 'Dept', w: 60 }, { t: 'Sample #', w: 112 }, { t: 'Date/time', w: 117 }, { t: 'Test', w: 52 }, { t: 'Results', w: 88 },
  { t: 'Units', w: 62 }, { t: 'Norm Range', w: 150 }, { t: 'Flags', w: 65 }, { t: 'Comments', w: 128 }, { t: 'Signed By', w: 122 },
  { t: 'Date time Signed', w: 205 },
]
const footButtons = [
  { t: 'Download Report', w: 190, c: 'green' }, { t: 'Message', w: 96, c: 'red' }, { t: 'Sign Results', w: 133, c: 'dark' },
]
const marks = ['m1', 'm2', 'm3', 'm4', 'm5']

const tasks = ['ie', 'folder', 'tools', 'sql', 'npp', 'chrome', 'clock', 'wordlookup', 'xampp', 'server', 'notepad', 'cmd', 'monitor', 'la']

const dockA = ['finder', 'launchpad', 'safari', 'imessage', 'mail', 'maps', 'photos', 'terminal', 'facetime', 'calendar', 'contacts', 'reminders', 'notes', 'tv', 'music', 'podcasts', 'keynote', 'numbers', 'garage', 'pages', 'appstore', 'settings', 'chromeApp', 'whatsapp', 'gear', 'word', 'excel', 'shareit', 'sublime']
const dockB = ['brave', 'filezilla', 'skype', 'youtube']
const dockC = ['doc', 'winA', 'winB', 'trash']
const running = new Set(['finder', 'chromeApp', 'whatsapp', 'gear', 'sublime', ...dockB])
</script>

<template>
  <div class="screen">
    <header class="menubar">
      <Ico n="apple" class="apple" />
      <b v-fit="102">Chrome</b>
      <span v-for="m in menus" :key="m.t" v-fit="m.w">{{ m.t }}</span>
      <div class="status">
        <div v-for="s in status" :key="s" class="slot" :class="s"><Ico :n="s" /></div>
        <div class="slot"><i class="abox">A</i></div>
        <em v-fit="47" class="pct">39%</em>
        <Ico n="battery" vb="0 0 49 24" class="battery" />
        <Ico n="wifi" class="wifi" />
        <Ico n="search" class="msearch" />
        <Ico n="control" class="mctl" />
        <span v-fit="261" class="date">Wed 15 Feb&nbsp; 8:41 PM</span>
      </div>
    </header>

    <section class="window">
      <div class="tabstrip">
        <div class="lights"><i class="r" /><i class="y" /><i class="g" /></div>
        <div v-for="(t, k) in tabs" :key="k" class="tab" :class="{ early: k < 6, active: k === 1, nosep: k < 2 }">
          <Ico :n="t[0]" class="fav" />
          <span>{{ t[1] }}</span>
          <Ico n="close" class="x" />
        </div>
        <Ico n="plus" class="newtab" />
        <Ico n="chevDown" class="tabmenu" />
      </div>
      <div class="toolbar">
        <Ico n="back" class="nav" />
        <Ico n="fwd" class="nav dim" />
        <Ico n="reload" class="nav" />
        <div class="omni">
          <Ico n="lock" class="lock" />
          <span v-fit="361">remotedesktop.google.com</span><span v-fit="842" class="path">/u/3/access/session/912e5549-d38d-b1ea-593f-d61ee1cc7d64</span>
          <div class="omni-icons"><Ico v-for="o in omniIcons" :key="o" :n="o" /></div>
        </div>
        <div class="exts"><Ico v-for="e in extIcons" :key="e" :n="e" /></div>
        <div class="avatar">S</div>
        <div class="update"><span v-fit="89">Update</span><Ico n="dots" /></div>
      </div>

      <div class="remote">
        <div class="wtabs">
          <div class="wactive"><Ico n="globe" /><span>Cav</span><Ico n="close" class="x" /></div>
          <div v-for="(t, k) in innerTabs" :key="k" class="wtab"><Ico :n="t[0]" /><span>{{ t[1] }}</span></div>
          <div class="wtab cut"><Ico n="xampp" /></div>
          <div class="wtab newt"><span>New Ta</span></div>
          <div class="wtab rt"><Ico n="download" class="dl" /><span>Downlo</span></div>
          <div class="wtab rt"><Ico n="globe" /><span>localho</span></div>
          <Ico n="plus" class="wplus" />
          <div class="winctl">
            <Ico n="chevThin" class="c1" /><i class="min" /><Ico n="restore" class="c3" /><Ico n="thinClose" class="c4" />
          </div>
          <div class="rdp">
            <svg viewBox="0 0 888 72" class="rdp-bg">
              <defs>
                <linearGradient id="rdpg" x1="0" y1="0" x2="0" y2="1">
                  <stop offset="0" stop-color="#86a8db" /><stop offset=".44" stop-color="#4672b0" />
                  <stop offset=".46" stop-color="#1b3c82" /><stop offset="1" stop-color="#1b3a7c" />
                </linearGradient>
              </defs>
              <path d="M1 -1L34 70H854L887 -1z" fill="url(#rdpg)" stroke="#3b4658" stroke-width="2" />
              <path d="M34 67.500H854" stroke="#8ca5cf" stroke-width="2.500" />
            </svg>
            <div class="rdp-row">
              <div class="pinbox"><Ico n="pin" /></div>
              <Ico n="bars" class="sig" />
              <span v-fit="154">10.150.0.72</span>
              <i class="rmin" />
              <Ico n="rdpRestore" class="rres" />
              <Ico n="bold" class="rx" />
            </div>
          </div>
        </div>
        <div class="wbar">
          <Ico n="back" class="nav" /><Ico n="fwd" class="nav" /><Ico n="reload" class="nav" />
          <div class="womni">
            <Ico n="warn" class="warn" />
            <span v-fit="141" class="ns">Not secure</span><i class="vr" />
            <span v-fit="148" class="host">10.150.0.72</span><span v-fit="378">/ocm/viewRequest/33325/10</span>
            <div class="womni-icons"><Ico n="zoomOut" /><Ico n="shareWin" /><Ico n="star" /></div>
          </div>
          <Ico n="panel" class="panel" /><Ico n="person" class="person" /><Ico n="dots" class="wdots" />
        </div>

        <div class="page">
          <aside class="sidebar">
            <div class="side-in">
              <div class="brand">
                <svg viewBox="0 0 64 52" class="logo">
                  <ellipse cx="32" cy="26" rx="22" ry="25" fill="#fff" stroke="#cfd4da" stroke-width="1.500" />
                  <rect y="15" width="64" height="22" rx="3" fill="#174a8c" />
                  <text x="32" y="31" text-anchor="middle" textLength="58" lengthAdjust="spacingAndGlyphs" font-family="Liberation Sans, sans-serif" font-weight="700" font-size="14" fill="#dfe9f5">NetAcquire</text>
                </svg>
                <span v-fit="174">System Admin</span>
              </div>
              <h1 v-fit="99">OCM</h1>
              <div v-for="(n, k) in navTop" :key="n.t" class="item" :class="{ last: k === 3 }">
                <Ico :n="n.i" class="ni" :class="n.i" /><span v-fit="n.w">{{ n.t }}</span><Ico v-if="n.c" n="chevL" class="chev" />
              </div>
              <div class="item current">
                <Ico n="database" class="ni" /><span v-fit="110">Requests</span><Ico n="chevD" class="chev" />
              </div>
              <div class="subs">
                <div v-for="s in subNav" :key="s.t" class="sub"><i /><span v-fit="s.w">{{ s.t }}</span></div>
              </div>
              <div v-for="n in navBottom" :key="n.t" class="item lower">
                <Ico :n="n.i" class="ni" :class="n.i" /><span v-fit="n.w">{{ n.t }}</span><Ico v-if="n.c" n="chevL" class="chev" />
              </div>
            </div>
            <i class="side-thumb" />
          </aside>

          <main>
            <div class="topbar">
              <Ico n="burger" class="burger" />
              <b v-fit="208">Request # 33325</b>
              <div class="goback"><Ico n="arrowL" /><b v-fit="104">GO BACK</b></div>
            </div>
            <div class="card">
              <div class="demo">
                <div>
                  <h2 v-fit="507">Patient Demographics</h2>
                  <p v-for="p in patient" :key="p.t"><span v-fit="p.w">{{ p.t }}</span></p>
                </div>
                <div class="actions">
                  <div v-for="a in actions" :key="a.t" class="btn" :class="a.c"><span v-fit="a.w">{{ a.t }}</span></div>
                </div>
              </div>
              <div class="dtabs">
                <div class="dtab on"><span v-fit="191">Departments (All)</span></div>
                <div class="dtab"><span v-fit="138">Biochemistry</span></div>
              </div>
              <div class="grid head">
                <i /><b v-for="x in heads" :key="x.t"><span v-fit="x.w">{{ x.t }}</span></b>
              </div>
              <div class="grid row">
                <div><i class="cb"><Ico n="check" /></i></div>
                <div><span v-fit="155">Biochemistry</span></div>
                <div class="up"><span v-fit="126">70001915</span></div>
                <div><span v-fit="192">15-02-23 14:47</span></div>
                <div class="amy"><span v-fit="117">Amylase</span></div>
                <div><span v-fit="47">120</span></div>
                <div><span v-fit="47">IU/L</span></div>
                <div><span v-fit="90">28-100</span></div>
                <div><b class="flag">H</b></div>
                <div><i class="cm"><Ico n="note" /></i></div>
                <div>-</div>
                <div />
              </div>
              <div class="foot">
                <div v-for="f in footButtons" :key="f.t" class="btn" :class="f.c"><span v-fit="f.w">{{ f.t }}</span></div>
              </div>
            </div>
          </main>

          <div class="vscroll"><i class="up-arrow" /><i class="thumb" /><i class="down-arrow" /></div>

          <div class="toast">
            <Ico n="info" class="info" />
            <div class="toast-text"><span v-fit="133" class="tt">Warning</span><span v-fit="441" class="ts">Developers are working on the system.</span></div>
            <Ico n="thinClose" class="tx" />
          </div>
        </div>

        <div class="taskbar">
          <div class="sys"><Ico n="winlogo" /></div>
          <div class="sys"><Ico n="magnify" /></div>
          <div class="sys"><Ico n="taskview" /></div>
          <div class="tasks">
            <div v-for="t in tasks" :key="t" class="task" :class="t"><Ico :n="t" /></div>
          </div>
          <div class="tray">
            <Ico n="caretUp" class="caret" /><Ico n="xampp" class="tr" /><Ico n="net" class="tr" /><Ico n="mute" class="tr" /><Ico n="pen" class="tr penx" />
            <div class="two lang"><span v-fit="47">ENG</span><span v-fit="34">GA</span></div>
            <div class="two clockt"><span v-fit="56">15:41</span><span v-fit="121">15/02/2023</span></div>
            <Ico n="action" class="action" />
          </div>
          <i class="peek" />
        </div>

        <div v-for="m in marks" :key="m" class="mark" :class="m">
          <span v-fit="990">!customs-wareshussai@healthirl.net</span><br /><span v-fit="503">2023/02/15 14:54</span>
        </div>
        <div class="handle"><Ico n="chevL" /></div>
      </div>
    </section>

    <footer class="desk">
      <div class="dock">
        <div v-for="d in dockA" :key="d" class="di" :class="[d, { run: running.has(d) }]"><Ico :n="d" /><u v-if="d === 'reminders'">1</u></div>
        <s />
        <div v-for="d in dockB" :key="d" class="di run"><Ico :n="d" /></div>
        <s />
        <div v-for="d in dockC" :key="d" class="di"><Ico :n="d" /></div>
      </div>
    </footer>
  </div>
</template>

<style>
body { margin: 0; background: #000; }
</style>

<style scoped>
.screen * { box-sizing: border-box; flex-shrink: 0; }
svg { display: block; overflow: visible; }
.screen { width: 3420px; height: 2224px; overflow: hidden; display: flex; flex-direction: column; background: #03070f; font-family: Inter, sans-serif; white-space: nowrap; }
.screen span, .screen b, .screen em { font-style: normal; }

/* menu bar */
.menubar { height: 84px; padding: 0 34px 4px 37px; display: flex; align-items: center; gap: 41px; color: #f3eeea; font-size: 26px; font-weight: 500; text-shadow: 0 2px 4px rgba(0, 0, 0, .35); background: linear-gradient(90deg, #3a302c 0, #3b302b 180px, #63402a 760px, #8a4423 1300px, #963e1e 1760px, #7f311f 2330px, #572723 2660px, #3d2229 3050px, #2b1e29 3420px); }
.apple { width: 32px; height: 36px; margin: 0 -4px 4px 0; }
.menubar > b { font-weight: 700; }
.status { margin-left: auto; display: flex; align-items: center; }
.slot { width: 72px; display: flex; justify-content: center; }
.slot svg { width: 34px; height: 32px; margin-top: 3px; }
.slot.volume svg { width: 40px; }
.slot.airdrop, .slot.stage { opacity: .35; }
.slot.btoff svg { width: 28px; }
.slot.playc svg { width: 32px; }
.abox { width: 44px; height: 32px; margin-top: 5px; border-radius: 5px; background: #f3eeec; color: #4c2421; font: 700 24px/32px Inter, sans-serif; text-align: center; text-shadow: none; }
.pct { margin-left: 27px; font-size: 23px; margin-top: 2px; }
.battery { width: 50px; height: 24px; margin: 4px 0 0 10px; }
.wifi { width: 36px; height: 27px; margin: 0 0 0 38px; }
.msearch { width: 28px; height: 28px; margin: 4px 0 0 39px; }
.mctl { width: 30px; height: 30px; margin: 4px 0 0 35px; }
.date { margin-left: 34px; }

/* outer browser */
.window { height: 2073px; margin-top: 2px; border: 1px solid #55575a; border-top: 2px solid #77797b; border-radius: 22px; overflow: hidden; display: flex; flex-direction: column; background: #202124; }
.tabstrip { height: 82px; display: flex; align-items: flex-end; color: #eceded; position: relative; }
.lights { width: 187px; height: 82px; padding: 29px 0 0 41px; display: flex; gap: 16px; }
.lights i { width: 24px; height: 24px; border-radius: 50%; }
.lights .r { background: #ed6a5e; }
.lights .y { background: #f4bf4f; }
.lights .g { background: #61c554; }
.tab { width: 186px; height: 68px; padding: 1px 0 0 24px; display: flex; align-items: center; position: relative; }
.tab.early { width: 187.8px; }
.tab::after { content: ''; position: absolute; right: 0; top: 15px; width: 2px; height: 40px; background: #55565a; }
.tab.nosep::after { display: none; }
.tab.active { background: #35363a; border-radius: 16px 16px 0 0; }
.tab.active::before { content: ''; position: absolute; left: -12px; right: -12px; bottom: 0; height: 14px; background: radial-gradient(circle at 0 0, transparent 13px, #35363a 13.5px) left/12px 14px no-repeat, radial-gradient(circle at 100% 0, transparent 13px, #35363a 13.5px) right/12px 14px no-repeat; }
.fav { width: 31px; height: 32px; }
.tab span { width: 64px; margin-left: 16px; overflow: hidden; font-size: 23.5px; line-height: 32px; letter-spacing: -.2px; -webkit-mask-image: linear-gradient(90deg, #000 60%, transparent 98%); mask-image: linear-gradient(90deg, #000 60%, transparent 98%); }
.x { width: 23px; height: 23px; margin-left: 8px; }
.newtab { width: 30px; height: 30px; margin: 0 0 20px 29px; }
.tabmenu { width: 28px; height: 24px; margin: 0 0 21px 128px; }
.toolbar { height: 74px; border-bottom: 2px solid #5e5f62; background: #35363a; display: flex; align-items: center; padding-left: 29px; color: #eceded; }
.nav { width: 28px; height: 28px; margin-right: 36px; }
.nav.dim { opacity: .5; }
.omni { width: 2611px; height: 56px; margin-left: -7px; border-radius: 28px; background: #202124; display: flex; align-items: center; padding-left: 26px; font-size: 27px; color: #f1f1f1; }
.omni .path { color: #9a9b9e; }
.lock { width: 18px; height: 24px; margin-right: 25px; color: #9aa0a6; }
.omni-icons { margin-left: auto; padding-right: 20px; display: flex; gap: 34px; color: #c5c6c9; }
.omni-icons svg { width: 30px; height: 28px; }
.exts { margin-left: 30px; display: flex; gap: 34px; color: #f2f3f5; }
.exts svg { width: 30px; height: 30px; }
.avatar { width: 44px; height: 44px; margin-left: 28px; border-radius: 50%; background: #b22b60; text-align: center; font-size: 25px; line-height: 44px; color: #fff; }
.update { width: 175px; height: 56px; margin-left: 14px; border: 2px solid #f1aaa3; border-radius: 28px; background: #443f41; color: #f1a9a1; display: flex; align-items: center; font-size: 26px; padding-left: 24px; }
.update svg { width: 26px; height: 27px; margin-left: 20px; }

/* remote desktop */
.remote { height: 1915px; border: solid #6d6e6f; border-width: 0 5px 0 7px; position: relative; font-family: "Open Sans", sans-serif; background: #fff; }
.wtabs { height: 72px; background: #dee1e6; position: relative; display: flex; align-items: center; padding-bottom: 1px; font-size: 24px; color: #4c4f53; }
.wactive { width: 168px; height: 70px; margin: 1px 0 0 16px; border-radius: 14px 14px 0 0; background: #fff; display: flex; align-items: center; padding-left: 19px; }
.wactive > svg:first-child { width: 30px; height: 30px; }
.wactive span { width: 50px; margin-left: 19px; font-size: 25px; -webkit-mask-image: linear-gradient(90deg, #000 50%, transparent 90%); mask-image: linear-gradient(90deg, #000 50%, transparent 90%); }
.wactive .x { margin-left: 5px; color: #222; }
.wtab { width: 165.900px; height: 44px; border-right: 2px solid #8f9297; display: flex; align-items: center; padding-left: 15px; }
.wtab > svg { width: 34px; height: 34px; }
.wtab span { width: 84px; margin-left: 18px; overflow: hidden; letter-spacing: -.2px; -webkit-mask-image: linear-gradient(90deg, #000 50%, transparent 100%); mask-image: linear-gradient(90deg, #000 50%, transparent 100%); }
.wtab.cut { border: 0; width: 60px; }
.wtab.newt { width: 934px; padding-left: 836px; }
.wtab.newt span { margin-left: 0; }
.wtab.rt { width: 163.500px; }
.wtab.rt > svg { width: 31px; height: 31px; }
.wtab.rt > svg.dl { width: 24px; height: 27px; margin: 0 5px 0 4px; }
.wplus { width: 30px; height: 30px; margin-left: 32px; color: #333; }
.winctl { margin-left: auto; padding-right: 35px; margin-bottom: 10px; display: flex; align-items: center; color: #111; }
.c1 { width: 27px; height: 18px; margin-right: 73px; }
.min { width: 24px; height: 3px; background: #111; margin-right: 71px; }
.c3 { width: 27px; height: 26px; margin-right: 71px; }
.c4 { width: 29px; height: 26px; }
.rdp { position: absolute; left: 1522px; top: 0; width: 888px; height: 72px; }
.rdp-bg { width: 888px; height: 72px; overflow: hidden; }
.rdp-row { position: absolute; inset: 0; display: flex; align-items: center; color: #fff; font-size: 29px; padding: 0 0 8px 101px; }
.pinbox { width: 60px; height: 58px; margin-top: 0; background: rgba(52, 116, 202, .55); border: 2px solid rgba(74, 136, 214, .6); border-top: 0; display: flex; align-items: center; justify-content: center; }
.pinbox svg { width: 34px; height: 28px; margin-top: 3px; }
.sig { width: 32px; height: 33px; margin: 0 160px 0 15px; }
.rmin { width: 24px; height: 7px; background: #fff; margin: 22px 36px 0 98px; }
.rres { width: 30px; height: 32px; margin-right: 32px; }
.rx { width: 29px; height: 24px; }
.wbar { height: 79px; border-bottom: 2px solid #dcdee0; background: #fff; display: flex; align-items: center; padding: 1px 0 0 30px; color: #55595d; }
.wbar .nav { width: 32px; height: 32px; margin-right: 36px; }
.womni { width: 2943px; height: 60px; margin-left: -3px; border-radius: 30px; background: #f1f3f3; display: flex; align-items: center; padding-left: 19px; font-size: 27px; color: #6a6e72; }
.warn { width: 31px; height: 27px; margin-right: 19px; }
.vr { width: 2px; height: 34px; margin: 0 21px 0 19px; background: #a9acb0; }
.host { color: #202124; }
.womni-icons { margin-left: auto; padding-right: 22px; display: flex; gap: 37px; color: #5f6368; }
.womni-icons svg { width: 31px; height: 29px; }
.panel { width: 31px; height: 30px; margin-left: 32px; }
.person { width: 46px; height: 46px; margin-left: 29px; }
.wdots { width: 30px; height: 30px; margin-left: 32px; }

/* OCM page */
.page { height: 1680px; display: flex; position: relative; overflow: hidden; background: #f4f6f9; font-family: "Open Sans", sans-serif; color: #2a2d31; }
.sidebar { width: 459px; display: flex; background: #f4f6f8; position: relative; box-shadow: 0 0 28px rgba(0, 0, 0, .32); z-index: 1; }
.side-in { width: 446px; padding: 0 12px 0 14px; }
.side-thumb { width: 13px; height: 1586px; background: #a7a9aa; }
.brand { height: 120px; border-bottom: 2px solid #d9dcdf; display: flex; align-items: center; padding: 0 0 7px 22px; font-size: 24.500px; color: #5a5e63; }
.logo { width: 64px; height: 52px; margin-right: 17px; }
h1 { font-size: 43px; line-height: 60px; font-weight: 400; margin: 26px 0 10px 16px; color: #2b2e32; }
.item { height: 71.500px; border-bottom: 2px solid #d6d9dc; display: flex; align-items: center; padding: 0 26px 9px 30px; font-size: 24px; color: #65696e; }
.item.last { border-bottom-color: transparent; height: 70.500px; }
.item.lower { height: 71.100px; }
.ni { width: 36px; height: 31px; margin-right: 19px; color: #2f3336; margin-top: -3px; }
.ni.users, .ni.warehouse, .ni.vials { width: 40px; height: 30px; margin: -5px 17px 0 -2px; }
.ni.envelope { width: 33px; height: 27px; margin: -6px 20px 0 2px; }
.ni.building, .ni.user { width: 28px; margin: -7px 23px 0 4px; }
.chev { width: 17px; height: 18px; margin-left: auto; margin-top: 4px; color: #33373a; }
.item.current { height: 64px; border: 0; border-radius: 6px; background: #4284de; color: #fff; padding-bottom: 1px; margin-bottom: 3px; }
.current .ni, .current .chev { color: #fff; }
.current .ni { width: 30px; height: 33px; margin-left: 3px; margin-right: 22px; margin-top: -5px; }
.subs { height: 557px; border-bottom: 2px solid #d6d9dc; }
.sub { height: 68.900px; padding-left: 32px; display: flex; align-items: center; gap: 14px; font-size: 24px; color: #8b8e92; }
.sub span { margin-top: -1px; }
.sub i { width: 32px; height: 32px; border: 3px solid #7d8084; border-radius: 50%; }
main { width: 2910px; }
.topbar { height: 126px; background: #4284de; display: flex; align-items: center; padding: 17px 0 0 42px; color: #fff; font-size: 25px; }
.burger { width: 25px; height: 22px; margin: -16px 57px 0 0; }
.goback { width: 164px; height: 55px; margin-left: 15px; background: #4c9fb4; display: flex; align-items: center; padding-left: 17px; gap: 6px; }
.goback svg { width: 20px; height: 18px; }
.goback b { font-size: 24px; }
.card { height: 1560px; margin: 20px 28px 0 27px; padding: 0 38px 0 37px; background: #fff; border-top: 5px solid #4182c9; border-radius: 6px; box-shadow: 0 0 3px rgba(0, 0, 0, .25); }
.demo { height: 484px; border-bottom: 3px solid #e3e4e5; display: flex; justify-content: space-between; padding-top: 35px; }
h2 { margin: 0 0 18px; font-weight: 400; font-size: 47px; line-height: 60px; color: #24282c; }
p { margin: 0; font-size: 24px; line-height: 39.700px; color: #43474b; }
p span { display: inline-block; }
.actions { width: 441px; padding-top: 1px; display: flex; flex-direction: column; gap: 15.300px; }
.btn { height: 46.500px; border-radius: 5px; display: flex; justify-content: center; color: #fff; font-size: 23.500px; line-height: 43px; font-weight: 700; }
.teal { background: #4c9fb5; }
.blue { background: #4284de; }
.amber { background: #f3c342; color: #3a3118; font-weight: 400; }
.green { background: #3c877a; }
.red { background: #c94449; }
.grey { background: #70757b; }
.dark { background: #383c3f; }
.dtabs { height: 93px; border-bottom: 2px solid #dee1e3; display: flex; align-items: flex-end; margin-bottom: 10px; }
.dtab { height: 71px; padding: 0 27px; margin-bottom: -2px; font-size: 23px; line-height: 74px; color: #1f2225; -webkit-text-stroke: .3px; }
.dtab.on { width: 237px; padding: 0 0 0 24px; border-bottom: 5px solid #4478b8; border-radius: 4px; line-height: 72px; color: #4a72b8; }
.dtab span { display: inline-block; }
.grid { display: grid; grid-template-columns: 85px 291px 224px 328px 230px 181px 142px 294px 142px 253px 1fr 214px; }
.head { height: 53px; border: solid #cfe5f8; border-width: 3px 0; background: #4284de; color: #fff; font-size: 24px; line-height: 44px; }
.head span, .row span { display: inline-block; }
.row { height: 56px; background: #f2f2f2; font-size: 24px; line-height: 55px; color: #55595d; }
.row > div { height: 56px; }
.row .up { line-height: 43px; }
.row .amy { color: #26292c; font-size: 27px; line-height: 54px; -webkit-text-stroke: .6px; }
.cb { display: flex; width: 23px; height: 23px; margin: 15px 0 0 10px; border-radius: 2px; background: #2d6de0; color: #fff; padding: 3px; }
.flag { display: block; width: 123px; height: 47px; margin-top: 5px; border-radius: 4px; background: #c94449; color: #fff; text-align: center; line-height: 46px; }
.cm { display: flex; width: 57px; height: 38px; margin-top: 10px; border-radius: 5px; background: #9a9ea1; align-items: center; justify-content: center; }
.cm svg { width: 20px; height: 25px; }
.foot { display: flex; gap: 8px; margin-top: 41px; }
.foot .btn { padding: 0 8px; line-height: 42px; height: 47px; }
.vscroll { width: 38px; background: #f0f1f2; display: flex; flex-direction: column; align-items: center; padding-top: 15px; }
.up-arrow, .down-arrow { border: solid transparent; border-width: 0 8px 9px; border-bottom-color: #a0a2a4; }
.down-arrow { border-width: 9px 8px 0; border-top-color: #505356; margin-top: 275px; }
.thumb { width: 28px; height: 1346px; margin-top: 12px; background: #c1c1c1; }
.toast { position: absolute; z-index: 3; left: 2634px; top: 13px; width: 735px; height: 155px; background: #f3c341; box-shadow: 0 5px 8px rgba(0, 0, 0, .3); display: flex; font-family: "Liberation Sans", sans-serif; color: #3c3418; padding-left: 42px; }
.info { width: 84px; height: 84px; margin-top: 35px; color: #25241a; }
.toast-text { margin: 28px 0 0 43px; width: 518px; display: flex; flex-direction: column; }
.tt { font-size: 35px; line-height: 42px; }
.ts { font-size: 26px; line-height: 50px; }
.tx { width: 19px; height: 19px; margin-top: 31px; }

/* taskbar */
.taskbar { height: 84px; margin-right: -5px; background: #0f0f0d; display: flex; align-items: center; color: #fff; position: relative; }
.sys { width: 102px; display: flex; justify-content: center; }
.sys svg { width: 34px; height: 34px; }
.tasks { display: flex; margin-left: 5px; height: 84px; }
.task { width: 104.200px; display: flex; align-items: center; justify-content: center; position: relative; }
.task svg { width: 50px; height: 50px; margin-top: 2px; }
.task::after { content: ''; position: absolute; bottom: 0; left: 9px; right: 9px; height: 5px; background: #8ab6e3; }
.task.tools::after { display: none; }
.task.chrome { background: #444544; }
.task.chrome::after { left: 0; right: 0; }
.tray { margin-left: 1037px; display: flex; align-items: center; font-size: 24px; }
.caret { width: 27px; height: 22px; margin-right: 21px; }
.tr { width: 33px; height: 33px; margin-right: 18px; }
.penx { margin: 0 0 0 7px; height: 36px; }
.two { display: flex; flex-direction: column; align-items: center; line-height: 37px; padding-top: 2px; }
.lang { width: 47px; margin-left: 32px; }
.clockt { width: 121px; margin-left: 31px; }
.action { width: 36px; height: 36px; margin-left: 38px; }
.peek { position: absolute; right: 16px; top: 4px; bottom: 0; width: 2px; background: #5c5e5e; }

/* session overlay */
.mark { position: absolute; width: 1100px; text-align: center; font-family: "DejaVu Sans Condensed", "DejaVu Sans", sans-serif; font-stretch: condensed; font-size: 61px; line-height: 77px; color: #fff; -webkit-text-stroke: 6px #000; paint-order: stroke fill; opacity: .14; pointer-events: none; z-index: 4; }
.mark span { display: inline-block; }
.m1 { left: 299px; top: 397px; }
.m2 { left: 2001px; top: 397px; }
.m3 { left: 1151px; top: 875px; }
.m4 { left: 299px; top: 1352px; }
.m5 { left: 2001px; top: 1352px; }
.handle { position: absolute; z-index: 5; right: -65px; top: 911px; width: 96px; height: 96px; border-radius: 50%; background: #58595a; box-shadow: 0 2px 12px rgba(0, 0, 0, .5); display: flex; align-items: center; padding-left: 15px; color: #e6e6e6; }
.handle svg { width: 38px; height: 36px; }

/* dock */
.desk { height: 65px; padding-top: 3px; display: flex; justify-content: center; background: linear-gradient(rgba(0, 0, 0, .75), rgba(0, 0, 0, 0)), linear-gradient(90deg, #030e1b 0, #040f1c 690px, #33092a 760px, #420a2e 1160px, #3a0f1a 1500px, #300620 1900px, #45143c 2420px, #2a0926 2500px, #48102f 2700px, #5d1820 3080px, #7d2b14 3420px); }
.dock { width: 1370px; height: 51px; border: 2px solid #5a4248; border-radius: 14px; background: #2d141c; display: flex; padding: 7px 0 0 0; }
.di { width: 36px; height: 42px; position: relative; display: flex; justify-content: center; }
.di svg { width: 26px; height: 26px; }
.di.run::after { content: ''; position: absolute; left: 15px; top: 33px; width: 6px; height: 6px; border-radius: 50%; background: #b9a5ad; }
.di u { position: absolute; right: -1px; top: -5px; width: 13px; height: 13px; border-radius: 50%; background: #e5443b; color: #fff; font-size: 9px; line-height: 13px; text-align: center; text-decoration: none; }
.dock s { width: 2px; height: 38px; margin: -1px 7px 0 8px; background: #6b555c; }
</style>
